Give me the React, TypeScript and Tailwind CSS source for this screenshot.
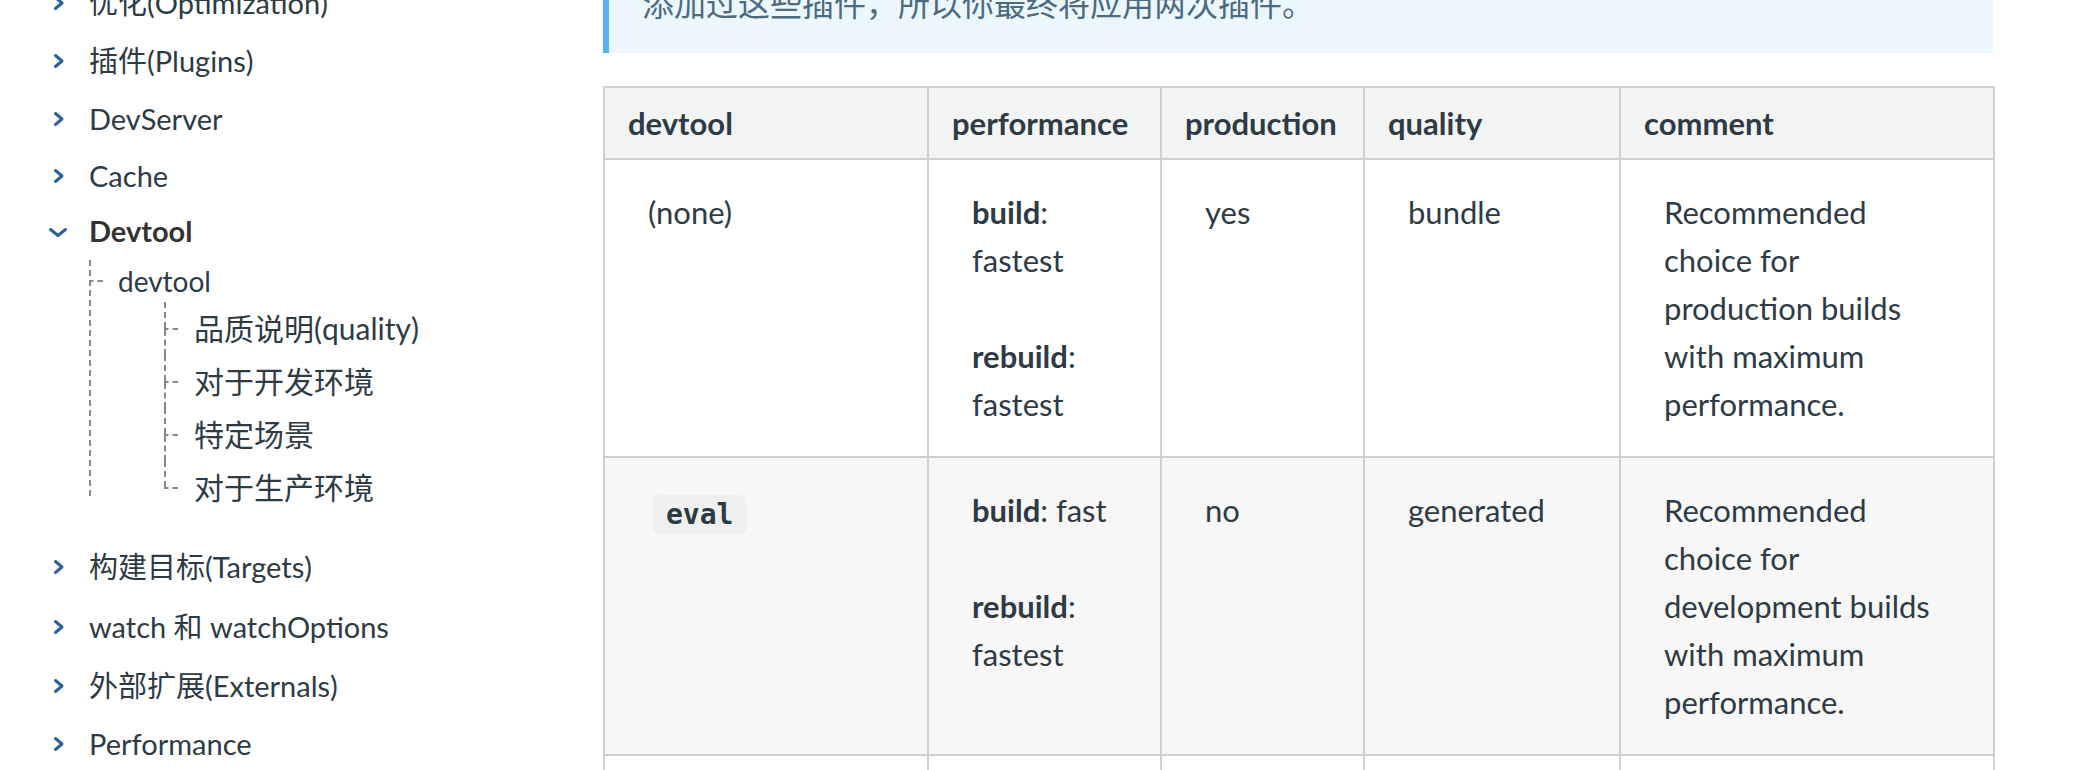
import React from 'react'

const navTop = [
  { label: '优化(Optimization)', h: 'h-[57px]' },
  { label: '插件(Plugins)', h: 'h-[59px]' },
  { label: 'DevServer', h: 'h-[58px]' },
  { label: 'Cache', h: 'h-[55px]' },
]

const navBottom = [
  { label: '构建目标(Targets)', h: 'h-[61px]' },
  { label: 'watch 和 watchOptions', h: 'h-[60px]' },
  { label: '外部扩展(Externals)', h: 'h-[58px]' },
  { label: 'Performance', h: 'h-[58px]' },
]

const subItems = ['品质说明(quality)', '对于开发环境', '特定场景', '对于生产环境']

const rows = [
  {
    devtool: '(none)',
    code: false,
    build: 'fastest',
    rebuild: 'fastest',
    production: 'yes',
    quality: 'bundle',
    comment: 'Recommended choice for production builds with maximum performance.',
    bg: 'bg-white',
  },
  {
    devtool: 'eval',
    code: true,
    build: 'fast',
    rebuild: 'fastest',
    production: 'no',
    quality: 'generated',
    comment: 'Recommended choice for development builds with maximum performance.',
    bg: 'bg-[#f7f7f7]',
  },
  {
    devtool: 'eval-cheap-source-map',
    code: true,
    build: 'ok',
    rebuild: 'fast',
    production: 'no',
    quality: 'transformed',
    comment: 'Tradeoff choice for development builds.',
    bg: 'bg-white',
  },
]

const ChevronRight = () => (
  <svg width="21" height="20" viewBox="0 0 21 20" fill="none" stroke="#2b6199" strokeWidth="3" strokeLinecap="round" strokeLinejoin="round">
    <polyline points="7.5,4.5 14,10 7.5,15.5" />
  </svg>
)

const ChevronDown = () => (
  <svg width="21" height="20" viewBox="0 0 21 20" fill="none" stroke="#2b6199" strokeWidth="3" strokeLinecap="round" strokeLinejoin="round">
    <polyline points="2.5,8.5 10,14.5 17.5,8.5" />
  </svg>
)

// short "- -" connector of the toc tree
const Dash = ({ w, d }: { w: number; d: string }) => (
  <svg width={w} height="2" className="shrink-0">
    <path d={d} stroke="#888" strokeWidth="2" />
  </svg>
)

const NavRow = ({ label, h, open }: { label: string; h: string; open?: boolean }) => (
  <div className={`flex items-center ${h}`}>
    <span className="flex w-[21px] justify-center">{open ? <ChevronDown /> : <ChevronRight />}</span>
    <span className={open ? 'ml-[20px] font-bold text-[#333]' : 'ml-[20px]'}>{label}</span>
  </div>
)

const Sidebar = () => (
  <aside className="-mt-[26px] w-[603px] shrink-0 pl-[48px] text-[29px] text-[#2d3b45]">
    {navTop.map((n) => (
      <NavRow key={n.label} label={n.label} h={n.h} />
    ))}
    <NavRow label="Devtool" h="h-[56px]" open />

    {/* toc tree */}
    <div className="ml-[41px] mt-px flex flex-col border-l-2 border-dashed border-[#888]">
      <div className="flex h-[42px] items-center text-[28px]">
        <Dash w={12} d="M0 1h2.5M6.5 1h6" />
        <span className="ml-[15px]">devtool</span>
      </div>
      <div className="-mb-[18px] ml-[73px] text-[30px]">
        {subItems.map((s, i) => (
          <div key={s} className="flex h-[53px]">
            <div className="flex w-[14px] flex-col">
              <div className="flex-1 border-l-2 border-dashed border-[#888]" />
              <Dash w={14} d="M0 1h4.5M8.5 1h5.5" />
              <div className={i === subItems.length - 1 ? 'flex-1' : 'flex-1 border-l-2 border-dashed border-[#888]'} />
            </div>
            <span className="ml-[16px] self-center">{s}</span>
          </div>
        ))}
      </div>
    </div>

    <div className="mt-[40px]">
      {navBottom.map((n) => (
        <NavRow key={n.label} label={n.label} h={n.h} />
      ))}
    </div>
  </aside>
)

const th = 'border-2 border-[#cfcfcf] bg-[#f2f3f3] px-[23px] py-[11px] text-left align-middle text-[31px] font-bold leading-[48px]'
const td = 'border-2 border-[#cfcfcf] px-[43px] py-[28px] align-top'

export default function App() {
  return (
    <div className="h-[770px] w-[2100px] overflow-hidden bg-white font-[Lato,'Noto_Sans_CJK_SC',sans-serif]">
      <div className="flex items-start">
        <Sidebar />
        <main className="-mt-[20px] w-[1390px] shrink-0">
          <div className="border-l-[6px] border-[#52b4f5] bg-[#ebf6fd] pb-[25px] pl-[33px] text-[32px] leading-[48px] text-[#4c6a80]">
            添加过这些插件，所以你最终将应用两次插件。
          </div>

          <table className="mt-[33px] w-[1390px] table-fixed border-collapse text-[31px] leading-[48px] text-[#2e3b44]">
            <colgroup>
              <col className="w-[324px]" />
              <col className="w-[233px]" />
              <col className="w-[203px]" />
              <col className="w-[256px]" />
              <col className="w-[374px]" />
            </colgroup>
            <thead>
              <tr>
                <th className={th}>devtool</th>
                <th className={th}>performance</th>
                <th className={th}>production</th>
                <th className={th}>quality</th>
                <th className={th}>comment</th>
              </tr>
            </thead>
            <tbody>
              {rows.map((r) => (
                <tr key={r.devtool} className={r.bg}>
                  <td className={td}>
                    {r.code ? (
                      <code className="ml-[5px] inline-block rounded-md bg-[#eef0f0] px-[13px] align-middle font-['DejaVu_Sans_Mono',monospace] text-[28px] font-semibold leading-[39px] text-[#2c3a42]">
                        {r.devtool}
                      </code>
                    ) : (
                      r.devtool
                    )}
                  </td>
                  <td className={td}>
                    <strong>build</strong>: {r.build}
                    <br />
                    <br />
                    <strong>rebuild</strong>: {r.rebuild}
                  </td>
                  <td className={td}>{r.production}</td>
                  <td className={td}>{r.quality}</td>
                  <td className={td}>{r.comment}</td>
                </tr>
              ))}
            </tbody>
          </table>
        </main>
      </div>
    </div>
  )
}
